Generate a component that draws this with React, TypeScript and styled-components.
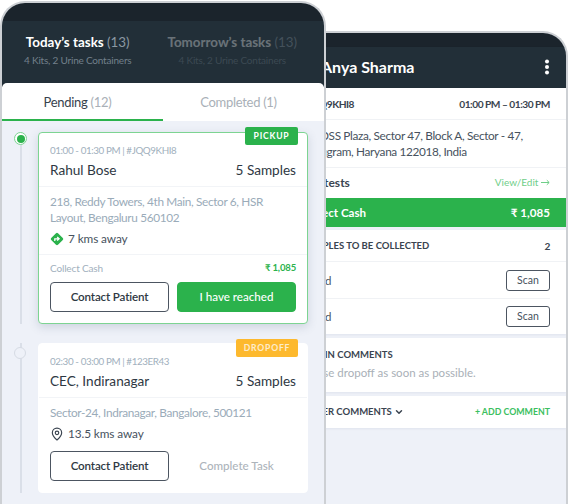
import React from 'react'
import styled, { createGlobalStyle } from 'styled-components'
import { ArrowLeft, ChevronDown, MapPin } from 'lucide-react'

const GlobalStyle = createGlobalStyle`
  html, body {
    margin: 0;
    padding: 0;
    background: #fff;
  }
  body {
    font-family: 'Lato', 'Noto Sans', sans-serif;
    -webkit-font-smoothing: antialiased;
  }
  * {
    box-sizing: border-box;
  }
`

const Stage = styled.div`
  position: relative;
  width: 568px;
  height: 504px;
  overflow: hidden;
  background: #fff;
`
const Phone = styled.div<{ $left: number; $top: number; $width: number; $front?: boolean }>`
  position: absolute;
  left: ${({ $left }) => $left}px;
  top: ${({ $top }) => $top}px;
  bottom: 0;
  z-index: ${({ $front }) => ($front ? 2 : 1)};
  display: flex;
  flex-direction: column;
  width: ${({ $width }) => $width}px;
  background: #eef1f8;
  border: 2px solid #cdd0d4;
  border-bottom: none;
  border-radius: 25px 25px 0 0;
  overflow: hidden;
`
const StatusBar = styled.div<{ $height: number }>`
  flex: none;
  height: ${({ $height }) => $height}px;
  background: #1b242c;
`
const TaskHeader = styled.div`
  flex: none;
  display: flex;
  gap: 36px;
  height: 66px;
  padding: 12px 26px 0 22px;
  background: #222f38;
`
const TaskDay = styled.div<{ $dim?: boolean }>`
  text-align: center;
  white-space: nowrap;
  opacity: ${({ $dim }) => ($dim ? 0.32 : 1)};
`
const DayTitle = styled.div`
  font-size: 13.4px;
  line-height: 18px;
  font-weight: 700;
  color: #fff;

  span {
    font-weight: 400;
    color: #8b98a3;
  }
`
const DaySub = styled.div`
  margin-top: 2px;
  font-size: 10px;
  line-height: 14px;
  letter-spacing: -0.2px;
  color: #72808b;
`
const Tabs = styled.div`
  flex: none;
  display: flex;
  height: 38px;
  margin-top: -4px;
  background: #fff;
  border-radius: 5px 5px 0 0;
`
const Tab = styled.div<{ $active?: boolean }>`
  flex: 1;
  padding: 10px 10px 0 0;
  text-align: center;
  font-size: 13px;
  line-height: 18px;
  letter-spacing: -0.3px;
  color: ${({ $active }) => ($active ? '#37424d' : '#a9b0b7')};
  border-bottom: 2px solid ${({ $active }) => ($active ? '#2bb24c' : 'transparent')};

  span {
    color: #a9b0b7;
  }
`
const TaskList = styled.div`
  flex: 1;
  padding: 11px 16px 0 0;
`
const TaskRow = styled.div`
  display: flex;
  padding-bottom: 19px;
`
const Rail = styled.div`
  flex: none;
  width: 36px;
  padding-left: 12px;
  background: linear-gradient(#dadfe8, #dadfe8) no-repeat 18px 0 / 2px 100%;
`
const ActiveDot = styled.div`
  display: flex;
  align-items: center;
  justify-content: center;
  width: 13px;
  height: 13px;
  background: #fff;
  border: 1.5px solid #7dd492;
  border-radius: 50%;

  &::after {
    content: '';
    width: 8px;
    height: 8px;
    background: #2bb24c;
    border-radius: 50%;
  }
`
const IdleDot = styled.div`
  width: 12px;
  height: 12px;
  margin-top: 4px;
  background: #eef1f8;
  border: 1.5px solid #d6dbe4;
  border-radius: 50%;
`
const Card = styled.div<{ $active?: boolean }>`
  position: relative;
  flex: 1;
  background: #fff;
  border-radius: 4px;
  border: ${({ $active }) => ($active ? '1.5px solid #7dd492' : '1.5px solid #fff')};
  box-shadow: ${({ $active }) => ($active ? '0 3px 10px rgba(60, 80, 110, 0.18)' : 'none')};
`
const Badge = styled.div<{ $color: string; $ink: string; $width: number; $top: number }>`
  position: absolute;
  top: ${({ $top }) => $top}px;
  right: 9px;
  width: ${({ $width }) => $width}px;
  height: 18px;
  text-align: center;
  font-size: 8.6px;
  line-height: 18px;
  font-weight: 700;
  letter-spacing: 0.8px;
  color: ${({ $ink }) => $ink};
  background: ${({ $color }) => $color};
  border-radius: 2px;
`
const CardHead = styled.div`
  padding: 9.5px 11px 6px;
  border-bottom: 1px solid #f2f4f7;
`
const TimeLine = styled.div`
  font-size: 9.8px;
  line-height: 14px;
  letter-spacing: -0.4px;
  color: #a1b0bd;
`
const NameRow = styled.div`
  display: flex;
  justify-content: space-between;
  margin-top: 3px;
  font-size: 13.6px;
  line-height: 20px;
  color: #2e3843;
`
const CardBody = styled.div<{ $divided?: boolean }>`
  padding: 7px 11px 6px;
  border-bottom: ${({ $divided }) => ($divided ? '1px solid #f2f4f7' : 'none')};
`
const Address = styled.div`
  font-size: 11.8px;
  line-height: 16px;
  letter-spacing: -0.35px;
  color: #9aabb9;
`
const Distance = styled.div`
  display: flex;
  align-items: center;
  gap: 4px;
  margin-top: 4px;
  font-size: 11.8px;
  line-height: 18px;
  letter-spacing: -0.1px;
  color: #47525e;

  svg {
    flex: none;
  }
`
const CardFoot = styled.div<{ $plain?: boolean }>`
  padding: ${({ $plain }) => ($plain ? '2px 11px 11.5px' : '6px 11px 11.5px')};
`
const CashRow = styled.div`
  display: flex;
  justify-content: space-between;
  align-items: center;
  height: 14px;
  margin-bottom: 7px;
  font-size: 10px;
  letter-spacing: -0.15px;
  color: #a1b0bd;

  b {
    font-size: 9.5px;
    color: #2bb24c;
  }
`
const Buttons = styled.div`
  display: flex;
  gap: 8px;
`
const Button = styled.div<{ $kind: 'outline' | 'solid' | 'ghost' }>`
  flex: 1;
  height: 30px;
  font-size: 11.6px;
  line-height: 27px;
  text-align: center;
  border-radius: 4px;
  letter-spacing: ${({ $kind }) => ($kind === 'outline' ? '-0.15px' : '0')};
  font-weight: ${({ $kind }) => ($kind === 'outline' ? 600 : 500)};
  color: ${({ $kind }) => ($kind === 'outline' ? '#2e3843' : $kind === 'solid' ? '#fff' : '#adb4bb')};
  background: ${({ $kind }) => ($kind === 'solid' ? '#2bb24c' : 'transparent')};
  border: 1.5px solid ${({ $kind }) => ($kind === 'outline' ? '#4c5561' : $kind === 'solid' ? '#2bb24c' : 'transparent')};
`
const PatientBar = styled.div`
  flex: none;
  display: flex;
  align-items: center;
  justify-content: space-between;
  height: 41px;
  padding: 0 16px 2px;
  color: #fff;
  background: #222f38;
  box-shadow: 0 1px 2px rgba(0, 0, 0, 0.3);
`
const PatientName = styled.div`
  display: flex;
  align-items: center;
  gap: 3px;
  font-size: 16px;
  font-weight: 700;
`
const Section = styled.div<{ $flush?: boolean }>`
  background: #fff;
  margin-bottom: ${({ $flush }) => ($flush ? 0 : 4)}px;
  box-shadow: 0 1px 2px rgba(60, 80, 110, 0.08);
`
const Line = styled.div<{ $height: number; $rule?: boolean; $lift?: number }>`
  display: flex;
  align-items: center;
  justify-content: space-between;
  height: ${({ $height }) => $height}px;
  padding: 0 16px ${({ $lift }) => $lift ?? 0}px;
  border-bottom: ${({ $rule }) => ($rule ? '1px solid #f0f2f5' : 'none')};
`
const Strong = styled.span`
  font-size: 10.2px;
  font-weight: 700;
  letter-spacing: -0.5px;
  color: #3a4450;
`
const TestsLabel = styled.span`
  font-size: 12px;
  font-weight: 700;
  color: #3a4450;
`
const AddComment = styled.span`
  font-size: 8.8px;
  font-weight: 700;
  color: #3cc05f;
`
const FullAddress = styled.div`
  padding: 8px 16px;
  height: 48px;
  font-size: 11.8px;
  line-height: 16px;
  letter-spacing: -0.35px;
  color: #47525e;
  border-bottom: 1px solid #f0f2f5;
`
const ViewEdit = styled.span`
  font-size: 10px;
  color: #6fce88;
`
const CashBar = styled.div`
  display: flex;
  align-items: center;
  justify-content: space-between;
  height: 29px;
  margin-bottom: 3px;
  padding: 0 16px;
  font-size: 11.6px;
  font-weight: 700;
  color: #fff;
  background: #2bb24c;
`
const SampleRow = styled.div`
  display: flex;
  align-items: center;
  justify-content: space-between;
  height: 36px;
  margin: 0 16px;
  font-size: 11.5px;
  color: #47525e;

  & + & {
    border-top: 1px solid #f0f2f5;
  }
`
const ScanButton = styled.div`
  width: 44px;
  height: 21px;
  font-size: 10.5px;
  line-height: 19px;
  text-align: center;
  color: #47525e;
  border: 1px solid #4c5561;
  border-radius: 3px;
`
const CommentBox = styled.div`
  height: 54px;
  padding: 4px 16px 0;
`
const CommentText = styled.div`
  margin-top: 4px;
  font-size: 11.5px;
  line-height: 16px;
  color: #a9b0b7;
`
const SectionTitle = styled.span`
  display: inline-flex;
  align-items: center;
  gap: 2px;
  font-size: 9.5px;
  font-weight: 700;
  color: #3a4450;
`

const DirectionIcon = () => (
  <svg width="14" height="14" viewBox="0 0 14 14">
    <rect x="2.2" y="2.2" width="9.6" height="9.6" rx="1.4" transform="rotate(45 7 7)" fill="#2bb24c" />
    <path d="M4.8 9V6.8h3.6M7.2 5l1.9 1.8-1.9 1.8" fill="none" stroke="#fff" strokeWidth="1.3" />
  </svg>
)

const MoreIcon = () => (
  <svg width="6" height="16" viewBox="0 0 6 16" fill="#fff">
    <circle cx="3" cy="2.5" r="2" />
    <circle cx="3" cy="8" r="2" />
    <circle cx="3" cy="13.5" r="2" />
  </svg>
)

const ArrowIcon = () => (
  <svg width="9" height="7" viewBox="0 0 9 7" fill="none" stroke="#6fce88" strokeWidth="1">
    <path d="M0 3.5h8M5.8 1.2 8.2 3.5 5.8 5.8" />
  </svg>
)

const App = () => {
  return (
    <Stage>
      <GlobalStyle />

      <Phone $left={0} $top={1} $width={326} $front>
        <StatusBar $height={18} />
        <TaskHeader>
          <TaskDay>
            <DayTitle>Today’s tasks <span>(13)</span></DayTitle>
            <DaySub>4 Kits, 2 Urine Containers</DaySub>
          </TaskDay>
          <TaskDay $dim>
            <DayTitle>Tomorrow’s tasks <span>(13)</span></DayTitle>
            <DaySub>4 Kits, 2 Urine Containers</DaySub>
          </TaskDay>
        </TaskHeader>

        <Tabs>
          <Tab $active>Pending <span>(12)</span></Tab>
          <Tab>Completed (1)</Tab>
        </Tabs>

        <TaskList>
          <TaskRow>
            <Rail><ActiveDot /></Rail>
            <Card $active>
              <Badge $color="#2bb24c" $ink="#fff" $width={53} $top={-6}>PICKUP</Badge>
              <CardHead>
                <TimeLine>01:00 - 01:30 PM | #JQQ9KHI8</TimeLine>
                <NameRow><span>Rahul Bose</span><span>5 Samples</span></NameRow>
              </CardHead>
              <CardBody $divided>
                <Address>218, Reddy Towers, 4th Main, Sector 6, HSR Layout, Bengaluru 560102</Address>
                <Distance><DirectionIcon />7 kms away</Distance>
              </CardBody>
              <CardFoot>
                <CashRow><span>Collect Cash</span><b>₹ 1,085</b></CashRow>
                <Buttons>
                  <Button $kind="outline">Contact Patient</Button>
                  <Button $kind="solid">I have reached</Button>
                </Buttons>
              </CardFoot>
            </Card>
          </TaskRow>

          <TaskRow>
            <Rail><IdleDot /></Rail>
            <Card>
              <Badge $color="#fdb92e" $ink="#fdeccb" $width={62} $top={-5}>DROPOFF</Badge>
              <CardHead>
                <TimeLine>02:30 - 03:00 PM | #123ER43</TimeLine>
                <NameRow><span>CEC, Indiranagar</span><span>5 Samples</span></NameRow>
              </CardHead>
              <CardBody>
                <Address>Sector-24, Indranagar, Bangalore, 500121</Address>
                <Distance><MapPin size={14} color="#3a4450" />13.5 kms away</Distance>
              </CardBody>
              <CardFoot $plain>
                <Buttons>
                  <Button $kind="outline">Contact Patient</Button>
                  <Button $kind="ghost">Complete Task</Button>
                </Buttons>
              </CardFoot>
            </Card>
          </TaskRow>
        </TaskList>
      </Phone>

      <Phone $left={284} $top={31} $width={284}>
        <StatusBar $height={14} />
        <PatientBar>
          <PatientName><ArrowLeft size={16} />Anya Sharma</PatientName>
          <MoreIcon />
        </PatientBar>

        <Section $flush>
          <Line $height={32} $rule>
            <Strong>#JQQ9KHI8</Strong>
            <Strong>01:00 PM – 01:30 PM</Strong>
          </Line>
          <FullAddress>12, DSS Plaza, Sector 47, Block A, Sector - 47, Gurugram, Haryana 122018, India</FullAddress>
          <Line $height={30} $lift={2}>
            <TestsLabel>Lab tests</TestsLabel>
            <ViewEdit>View/Edit <ArrowIcon /></ViewEdit>
          </Line>
        </Section>

        <CashBar><span>Collect Cash</span><span>₹ 1,085</span></CashBar>

        <Section>
          <Line $height={32} $rule>
            <SectionTitle>SAMPLES TO BE COLLECTED</SectionTitle>
            <Strong>2</Strong>
          </Line>
          <SampleRow>Blood<ScanButton>Scan</ScanButton></SampleRow>
          <SampleRow>Blood<ScanButton>Scan</ScanButton></SampleRow>
        </Section>

        <Section>
          <CommentBox>
            <SectionTitle>ADMIN COMMENTS</SectionTitle>
            <CommentText>Please dropoff as soon as possible.</CommentText>
          </CommentBox>
        </Section>

        <Section>
          <Line $height={32} $lift={1}>
            <SectionTitle>OTHER COMMENTS<ChevronDown size={10} strokeWidth={3.5} /></SectionTitle>
            <AddComment>+ ADD COMMENT</AddComment>
          </Line>
        </Section>
      </Phone>
    </Stage>
  )
}

export default App
